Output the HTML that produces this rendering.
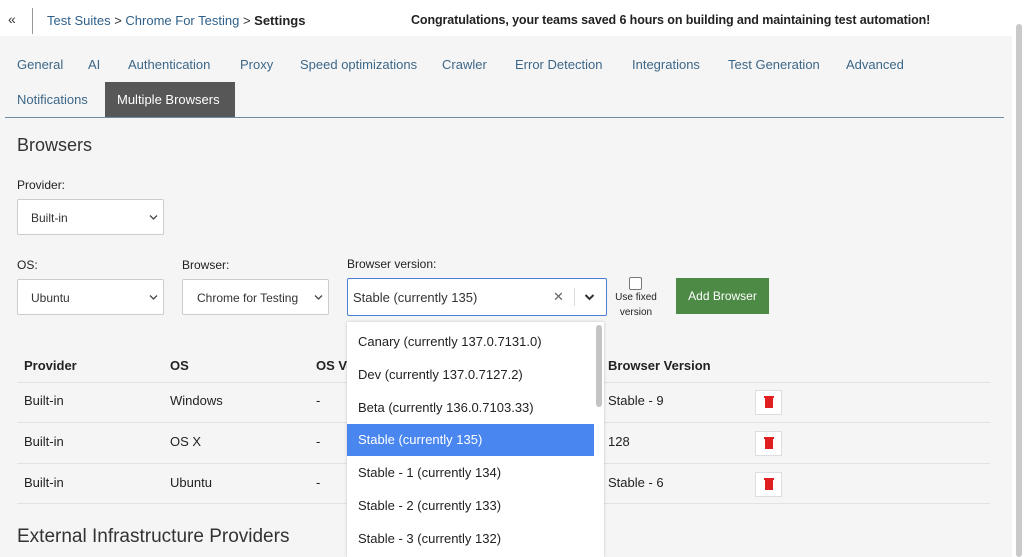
<!DOCTYPE html><html><head><style>
body{margin:0;width:1024px;height:557px;overflow:hidden;background:#fff;font-family:"Liberation Sans",sans-serif;position:relative}
.a{position:absolute;white-space:nowrap}
.tab{position:absolute;font-size:13px;color:#3d6788}
.sel{position:absolute;background:#fff;border:1px solid #ccc;border-radius:2px;font-size:12px;color:#333;box-sizing:border-box}
.chev{position:absolute;right:5px;top:13px}
.th{position:absolute;font-size:13px;font-weight:bold;color:#222}
.td{position:absolute;font-size:13px;color:#222}
.row{position:absolute;left:17px;width:973px;height:1px;background:#e2e2e2}
.del{position:absolute;left:755px;width:27px;height:25px;background:#fff;border:1px solid #ddd;box-sizing:border-box}
.it{position:absolute;left:0;width:247px;height:32px;line-height:32px;padding-left:11px;font-size:13px;color:#222;box-sizing:border-box}
</style></head><body>
<div class="a" style="left:0;top:36px;width:1012px;height:521px;background:#f5f5f5"></div>
<div class="a" style="left:1016px;top:24px;width:6px;height:533px;background:#c9c9c9;border-radius:3px"></div>
<div class="a" style="left:8px;top:11px;font-size:14px;color:#333">«</div>
<div class="a" style="left:32px;top:8px;width:1px;height:26px;background:#999"></div>
<div class="a" style="left:47px;top:13px;font-size:13px;color:#2f5f8a">Test Suites <span style="color:#333">&gt;</span> Chrome For Testing <span style="color:#333">&gt;</span> <b style="color:#222">Settings</b></div>
<div class="a" style="left:411px;top:13px;font-size:12.5px;font-weight:bold;color:#222;letter-spacing:-0.1px">Congratulations, your teams saved 6 hours on building and maintaining test automation!</div>
<div class="tab" style="left:17px;top:57px">General</div><div class="tab" style="left:88px;top:57px">AI</div>
<div class="tab" style="left:128px;top:57px">Authentication</div><div class="tab" style="left:240px;top:57px">Proxy</div>
<div class="tab" style="left:300px;top:57px">Speed optimizations</div><div class="tab" style="left:442px;top:57px">Crawler</div>
<div class="tab" style="left:515px;top:57px">Error Detection</div><div class="tab" style="left:632px;top:57px">Integrations</div>
<div class="tab" style="left:728px;top:57px">Test Generation</div><div class="tab" style="left:846px;top:57px">Advanced</div>
<div class="tab" style="left:17px;top:92px">Notifications</div>
<div class="a" style="left:105px;top:82px;width:130px;height:35px;background:#575757"></div>
<div class="tab" style="left:117px;top:92px;color:#fff">Multiple Browsers</div>
<div class="a" style="left:5px;top:117px;width:999px;height:1px;background:#6f8aa3"></div>
<div class="a" style="left:17px;top:135px;font-size:18px;color:#333">Browsers</div>
<div class="a" style="left:17px;top:178px;font-size:12px;color:#222">Provider:</div>
<div class="sel" style="left:17px;top:199px;width:147px;height:36px;padding:11px 13px">Built-in<svg class="chev" width="9" height="8" viewBox="0 0 9 8"><path d="M1 2.5l3.5 3.5 3.5-3.5" stroke="#444" stroke-width="1.3" fill="none"/></svg></div>
<div class="a" style="left:17px;top:258px;font-size:12px;color:#222">OS:</div>
<div class="a" style="left:182px;top:258px;font-size:12px;color:#222">Browser:</div>
<div class="a" style="left:347px;top:257px;font-size:12px;color:#222">Browser version:</div>
<div class="sel" style="left:17px;top:279px;width:147px;height:36px;padding:11px 13px">Ubuntu<svg class="chev" width="9" height="8" viewBox="0 0 9 8"><path d="M1 2.5l3.5 3.5 3.5-3.5" stroke="#444" stroke-width="1.3" fill="none"/></svg></div>
<div class="sel" style="left:182px;top:279px;width:147px;height:36px;padding:11px 14px">Chrome for Testing<svg class="chev" width="9" height="8" viewBox="0 0 9 8"><path d="M1 2.5l3.5 3.5 3.5-3.5" stroke="#444" stroke-width="1.3" fill="none"/></svg></div>
<div class="sel" style="left:347px;top:278px;width:260px;height:38px;border:1.5px solid #4a7fd6;padding:11px 5px;font-size:13px">Stable (currently 135)
<span style="position:absolute;left:205px;top:10px;color:#666">✕</span><span style="position:absolute;left:226px;top:9px;width:1px;height:18px;background:#ddd"></span><svg style="position:absolute;left:236px;top:14px" width="11" height="8" viewBox="0 0 11 8"><path d="M1.5 2l4 4 4-4" stroke="#333" stroke-width="2" fill="none"/></svg></div>
<div class="a" style="left:629px;top:277px;width:11px;height:11px;border:1px solid #777;border-radius:2px;background:#fff"></div>
<div class="a" style="left:613px;top:290px;font-size:10px;color:#222;text-align:center;line-height:15px;width:46px">Use fixed<br>version</div>
<div class="a" style="left:676px;top:278px;width:93px;height:36px;background:#4d8a45;color:#fff;font-size:12px;text-align:center;line-height:36px">Add Browser</div>
<div class="th" style="left:24px;top:358px">Provider</div><div class="th" style="left:170px;top:358px">OS</div>
<div class="th" style="left:316px;top:358px">OS Version</div><div class="th" style="left:608px;top:358px">Browser Version</div>
<div class="row" style="top:382px"></div><div class="row" style="top:422px"></div><div class="row" style="top:463px"></div><div class="row" style="top:503px"></div>
<div class="td" style="left:24px;top:393px">Built-in</div><div class="td" style="left:170px;top:393px">Windows</div><div class="td" style="left:316px;top:393px">-</div><div class="td" style="left:608px;top:393px">Stable - 9</div>
<div class="td" style="left:24px;top:434px">Built-in</div><div class="td" style="left:170px;top:434px">OS X</div><div class="td" style="left:316px;top:434px">-</div><div class="td" style="left:608px;top:434px">128</div>
<div class="td" style="left:24px;top:475px">Built-in</div><div class="td" style="left:170px;top:475px">Ubuntu</div><div class="td" style="left:316px;top:475px">-</div><div class="td" style="left:608px;top:475px">Stable - 6</div>
<div class="del" style="top:390px"><div class="a" style="left:9px;top:7px;width:8px;height:10px;background:#e02020"></div><div class="a" style="left:8px;top:5px;width:10px;height:2px;background:#e02020"></div></div>
<div class="del" style="top:431px"><div class="a" style="left:9px;top:7px;width:8px;height:10px;background:#e02020"></div><div class="a" style="left:8px;top:5px;width:10px;height:2px;background:#e02020"></div></div>
<div class="del" style="top:472px"><div class="a" style="left:9px;top:7px;width:8px;height:10px;background:#e02020"></div><div class="a" style="left:8px;top:5px;width:10px;height:2px;background:#e02020"></div></div>
<div class="a" style="left:17px;top:526px;font-size:19px;color:#333">External Infrastructure Providers</div>
<div class="a" style="left:347px;top:322px;width:257px;height:235px;background:#fff;box-shadow:0 0 3px rgba(0,0,0,.2);overflow:hidden">
<div class="it" style="top:4px">Canary (currently 137.0.7131.0)</div>
<div class="it" style="top:37px">Dev (currently 137.0.7127.2)</div>
<div class="it" style="top:70px">Beta (currently 136.0.7103.33)</div>
<div class="it" style="top:102px;background:#4a86f0;color:#fff">Stable (currently 135)</div>
<div class="it" style="top:135px">Stable - 1 (currently 134)</div>
<div class="it" style="top:168px">Stable - 2 (currently 133)</div>
<div class="it" style="top:201px">Stable - 3 (currently 132)</div>
<div class="a" style="left:249px;top:3px;width:6px;height:82px;background:#c4c4c4;border-radius:3px"></div>
</div>
</body></html>
